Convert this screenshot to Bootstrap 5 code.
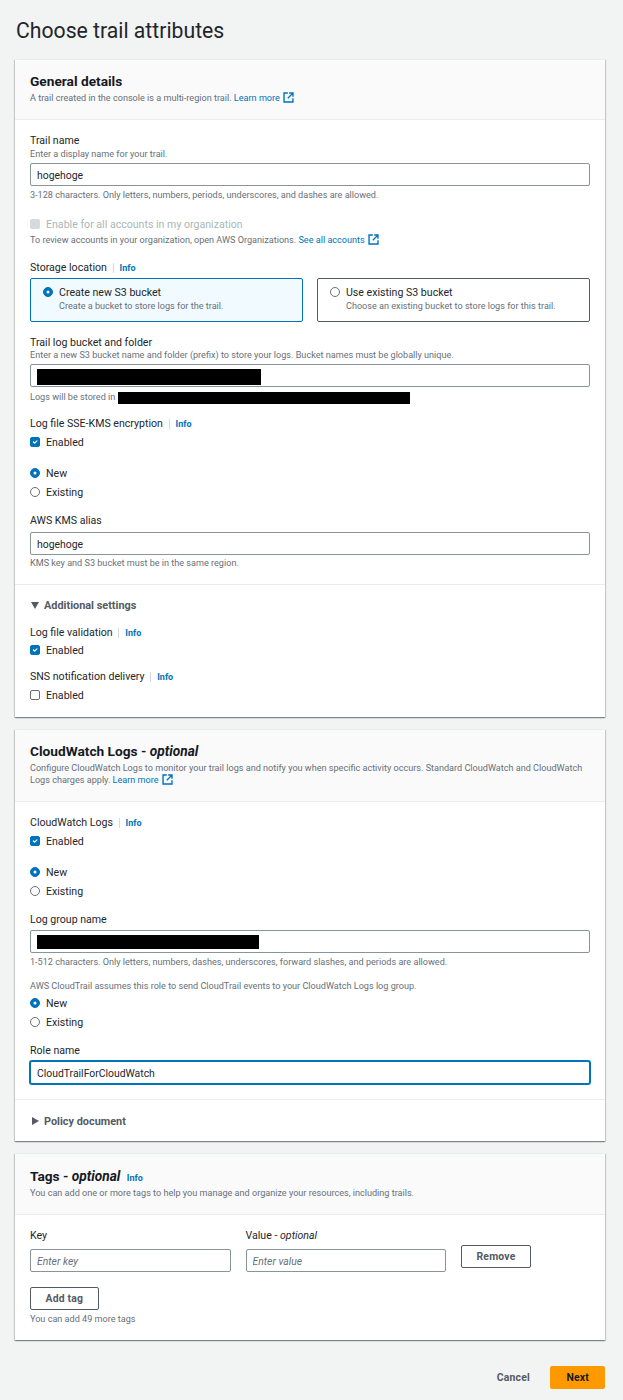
<!DOCTYPE html>
<html lang="en">
<head>
    <meta charset="UTF-8">
    <meta name="viewport" content="width=device-width, initial-scale=1.0">
    <title>Choose trail attributes</title>
    <link href="https://cdn.jsdelivr.net/npm/bootstrap@5.3.0/dist/css/bootstrap.min.css" rel="stylesheet">
    <script src="https://cdn.jsdelivr.net/npm/bootstrap@5.3.0/dist/js/bootstrap.bundle.min.js"></script>
    <style>
        body { background: #f2f3f3; color: #22262b; font-family: Roboto, "Liberation Sans", sans-serif; font-size: 10.6px; line-height: 14px; }
        .page-wrap { padding: 16px 18px 0 15px; }
        .page-title { font-size: 21.2px; line-height: 30px; font-weight: 400; margin: 0 0 13px 1px; }
        .aws-card { border: 0; border-top: 1px solid #eaeded; border-radius: 0; background: #fff; box-shadow: 0 1px 1px rgba(0,28,36,.3), 1px 1px 1px rgba(0,28,36,.15), -1px 1px 1px rgba(0,28,36,.15); margin-bottom: 12px; }
        .aws-head { background: #fafafa; border-bottom: 1px solid #eaeded; padding: 13px 15px 14px; border-radius: 0; }
        .aws-head.head-low { padding-top: 14px; }
        .aws-head h2 { font-size: 13.7px; line-height: 17px; font-weight: 700; margin: 0; color: #16191f; }
        .aws-head h2 em { font-weight: 700; }
        .aws-head h2 .info-link { line-height: 1; }
        .aws-head .hint { margin-top: 1px; }
        .aws-head .hint-wrap { line-height: 12px; margin-top: 2px; margin-bottom: 1px; }
        .aws-body { padding: 13px 15px 14px; }
        .body-role { padding-bottom: 15px; }
        .aws-foot { border-top: 1px solid #eaeded; padding: 13px 15px 15px; }
        .foot-policy { padding: 14px 15px 13px; }
        .fld-text, .form-check-label { display: block; padding-top: 1px; margin-bottom: -1px; }
        .hint { font-size: 9.1px; line-height: 14px; color: #687078; }
        .aws-link { color: #0073bb; text-decoration: none; }
        .ext-icon { vertical-align: -2px; margin-left: 1px; }
        .info-link { color: #0073bb; font-size: 9px; font-weight: 700; text-decoration: none; border-left: 1px solid #d5dbdb; padding-left: 6px; margin-left: 3px; }
        .aws-input { font-size: 10.4px; line-height: 14px; height: 23px; padding: 4px 6px 2px; border: 1px solid #879596; border-radius: 2px; color: #22262b; background: #fff; margin-top: 2px; }
        .aws-input::placeholder { font-style: italic; color: #687078; }
        .aws-input.is-focused { border-color: #0073bb; box-shadow: 0 0 0 1px #0073bb; }
        .redact-box { position: relative; }
        .redact { background: #000; display: block; }
        .redact-input { position: absolute; left: 7px; top: 5px; width: 224px; height: 16px; }
        .redact-short { width: 222px; height: 14px; }
        .redact-inline { display: inline-block; width: 292px; height: 12px; vertical-align: -4px; margin-left: 3px; }
        .form-check { min-height: 14px; padding-left: 16px; margin: 0; }
        .form-check .form-check-input { width: 10px; height: 10px; margin-top: 2px; margin-left: -16px; border: 1px solid #687078; }
        .form-check .form-check-input[type=checkbox] { border-radius: 2px; }
        .form-check-input:checked { background-color: #0073bb; border-color: #0073bb; }
        .form-check-input[type=radio]:checked { background-size: 80%; }
        .form-check .form-check-input:disabled { background-color: #d5dbdb; border-color: #d5dbdb; opacity: 1; }
        .form-check-input:disabled ~ .form-check-label { color: #aab7b8; opacity: 1; }
        .radio-stack .form-check + .form-check { margin-top: 5px; }
        .tile { flex: 1 1 0; border: 1px solid #545b64; border-radius: 2px; padding: 6px 12px; height: 44px; }
        .tile.form-check { padding-left: 12px; display: flex; gap: 6px; }
        .tile.picked { border-color: #0073bb; background: #f1faff; }
        .tile.form-check .form-check-input { margin: 2px 0 0; flex-shrink: 0; }
        .tile-row { gap: 14px; margin-top: 4px; }
        .expander { font-size: 10.9px; font-weight: 700; color: #545b64; display: flex; align-items: center; gap: 5px; }
        .expander svg { margin-left: 1px; }
        .aws-btn { font-size: 10.4px; font-weight: 700; line-height: 14px; height: 23px; padding: 3px 14.5px; border: 1px solid #545b64; border-radius: 2px; background: #fff; color: #545b64; letter-spacing: .2px; }
        .btn-next { background: #f90; border-color: #f90; color: #16191f; padding: 3px 15px; }
        .btn-cancel { border-color: transparent; background: transparent; }
        .tag-col { width: 200.5px; }
        .tag-row { gap: 15px; }
        .tag-action { padding-top: 17px; }
        .foot-row { padding: 14px 0 11px; gap: 5px; }
        .sp-1 { margin-top: 1px; } .sp-2 { margin-top: 2px; } .sp-3 { margin-top: 3px; } .sp-4 { margin-top: 4px; } .sp-5 { margin-top: 5px; }
        .sp-7 { margin-top: 7px; } .sp-10 { margin-top: 10px; } .sp-12 { margin-top: 12px; } .sp-13 { margin-top: 13px; }
        .sp-14 { margin-top: 14px; } .sp-15 { margin-top: 15px; } .sp-17 { margin-top: 17px; } .sp-neg { margin-top: -2px; }
    </style>
</head>
<body>
<div class="page-wrap">
    <h1 class="page-title">Choose trail attributes</h1>

    <div class="card aws-card">
        <div class="card-header aws-head">
            <h2>General details</h2>
            <div class="hint">A trail created in the console is a multi-region trail. <a class="aws-link" href="#">Learn more
                <svg class="ext-icon" width="11" height="11" viewBox="0 0 16 16" fill="none" stroke="#0073bb" stroke-width="2"><path d="M7 1.500H1.500v13h13V9M9 1.500h5.500V7M14 2L7 9"/></svg></a></div>
        </div>
        <div class="card-body aws-body">
            <div class="fld-text">Trail name</div>
            <div class="hint">Enter a display name for your trail.</div>
            <input class="form-control aws-input" type="text" value="hogehoge">
            <div class="hint sp-2">3-128 characters. Only letters, numbers, periods, underscores, and dashes are allowed.</div>

            <div class="form-check sp-15">
                <input class="form-check-input" type="checkbox" id="orgAll" disabled>
                <label class="form-check-label" for="orgAll">Enable for all accounts in my organization</label>
            </div>
            <div class="hint sp-2">To review accounts in your organization, open AWS Organizations. <a class="aws-link" href="#">See all accounts
                <svg class="ext-icon" width="11" height="11" viewBox="0 0 16 16" fill="none" stroke="#0073bb" stroke-width="2"><path d="M7 1.500H1.500v13h13V9M9 1.500h5.500V7M14 2L7 9"/></svg></a></div>

            <div class="fld-text sp-13">Storage location <a class="info-link" href="#">Info</a></div>
            <div class="d-flex tile-row">
                <div class="tile picked form-check">
                    <input class="form-check-input" type="radio" name="bucket" checked>
                    <div><div class="fld-text">Create new S3 bucket</div><div class="hint">Create a bucket to store logs for the trail.</div></div>
                </div>
                <div class="tile form-check">
                    <input class="form-check-input" type="radio" name="bucket">
                    <div><div class="fld-text">Use existing S3 bucket</div><div class="hint">Choose an existing bucket to store logs for this trail.</div></div>
                </div>
            </div>

            <div class="fld-text sp-13">Trail log bucket and folder</div>
            <div class="hint sp-neg">Enter a new S3 bucket name and folder (prefix) to store your logs. Bucket names must be globally unique.</div>
            <div class="redact-box">
                <input class="form-control aws-input" type="text">
                <span class="redact redact-input"></span>
            </div>
            <div class="hint sp-3">Logs will be stored in<span class="redact redact-inline"></span></div>

            <div class="fld-text sp-12">Log file SSE-KMS encryption <a class="info-link" href="#">Info</a></div>
            <div class="form-check sp-5">
                <input class="form-check-input" type="checkbox" id="sse" checked>
                <label class="form-check-label" for="sse">Enabled</label>
            </div>
            <div class="radio-stack sp-17">
                <div class="form-check">
                    <input class="form-check-input" type="radio" name="kms" id="kmsNew" checked>
                    <label class="form-check-label" for="kmsNew">New</label>
                </div>
                <div class="form-check">
                    <input class="form-check-input" type="radio" name="kms" id="kmsOld">
                    <label class="form-check-label" for="kmsOld">Existing</label>
                </div>
            </div>
            <div class="fld-text sp-14">AWS KMS alias</div>
            <input class="form-control aws-input sp-5" type="text" value="hogehoge">
            <div class="hint sp-1">KMS key and S3 bucket must be in the same region.</div>
        </div>
        <div class="aws-foot">
            <div class="expander">
                <svg width="8" height="7" viewBox="0 0 8 7"><path d="M0 0h8L4 7z" fill="#545b64"/></svg><span class="fld-text">Additional settings</span>
            </div>
            <div class="fld-text sp-13">Log file validation <a class="info-link" href="#">Info</a></div>
            <div class="form-check sp-4">
                <input class="form-check-input" type="checkbox" id="val" checked>
                <label class="form-check-label" for="val">Enabled</label>
            </div>
            <div class="fld-text sp-12">SNS notification delivery <a class="info-link" href="#">Info</a></div>
            <div class="form-check sp-5">
                <input class="form-check-input" type="checkbox" id="sns">
                <label class="form-check-label" for="sns">Enabled</label>
            </div>
        </div>
    </div>

    <div class="card aws-card">
        <div class="card-header aws-head">
            <h2>CloudWatch Logs - <em>optional</em></h2>
            <div class="hint hint-wrap">Configure CloudWatch Logs to monitor your trail logs and notify you when specific activity occurs. Standard CloudWatch and CloudWatch Logs charges apply. <a class="aws-link" href="#">Learn more
                <svg class="ext-icon" width="11" height="11" viewBox="0 0 16 16" fill="none" stroke="#0073bb" stroke-width="2"><path d="M7 1.500H1.500v13h13V9M9 1.500h5.500V7M14 2L7 9"/></svg></a></div>
        </div>
        <div class="card-body aws-body body-role">
            <div class="fld-text">CloudWatch Logs <a class="info-link" href="#">Info</a></div>
            <div class="form-check sp-5">
                <input class="form-check-input" type="checkbox" id="cw" checked>
                <label class="form-check-label" for="cw">Enabled</label>
            </div>
            <div class="radio-stack sp-17">
                <div class="form-check">
                    <input class="form-check-input" type="radio" name="lg" id="lgNew" checked>
                    <label class="form-check-label" for="lgNew">New</label>
                </div>
                <div class="form-check">
                    <input class="form-check-input" type="radio" name="lg" id="lgOld">
                    <label class="form-check-label" for="lgOld">Existing</label>
                </div>
            </div>
            <div class="fld-text sp-14">Log group name</div>
            <div class="redact-box sp-4">
                <input class="form-control aws-input mt-0" type="text">
                <span class="redact redact-input redact-short"></span>
            </div>
            <div class="hint sp-2">1-512 characters. Only letters, numbers, dashes, underscores, forward slashes, and periods are allowed.</div>
            <div class="hint sp-10">AWS CloudTrail assumes this role to send CloudTrail events to your CloudWatch Logs log group.</div>
            <div class="radio-stack sp-3">
                <div class="form-check">
                    <input class="form-check-input" type="radio" name="role" id="roleNew" checked>
                    <label class="form-check-label" for="roleNew">New</label>
                </div>
                <div class="form-check">
                    <input class="form-check-input" type="radio" name="role" id="roleOld">
                    <label class="form-check-label" for="roleOld">Existing</label>
                </div>
            </div>
            <div class="fld-text sp-14">Role name</div>
            <input class="form-control aws-input is-focused sp-4" type="text" value="CloudTrailForCloudWatch">
        </div>
        <div class="aws-foot foot-policy">
            <div class="expander">
                <svg width="8" height="8" viewBox="0 0 8 8"><path d="M1 0l7 4-7 4z" fill="#545b64"/></svg><span class="fld-text">Policy document</span>
            </div>
        </div>
    </div>

    <div class="card aws-card">
        <div class="card-header aws-head head-low">
            <h2>Tags - <em>optional</em> <a class="info-link border-0 ps-0" href="#">Info</a></h2>
            <div class="hint">You can add one or more tags to help you manage and organize your resources, including trails.</div>
        </div>
        <div class="card-body aws-body">
            <div class="d-flex tag-row">
                <div class="tag-col">
                    <div class="fld-text">Key</div>
                    <input class="form-control aws-input sp-7" type="text" placeholder="Enter key">
                </div>
                <div class="tag-col">
                    <div class="fld-text">Value - <em>optional</em></div>
                    <input class="form-control aws-input sp-7" type="text" placeholder="Enter value">
                </div>
                <div class="tag-action"><button class="btn aws-btn" type="button">Remove</button></div>
            </div>
            <button class="btn aws-btn sp-15 d-block" type="button">Add tag</button>
            <div class="hint sp-2">You can add 49 more tags</div>
        </div>
    </div>

    <div class="d-flex justify-content-end align-items-center foot-row">
        <button class="btn aws-btn btn-cancel" type="button">Cancel</button>
        <button class="btn aws-btn btn-next" type="button">Next</button>
    </div>
</div>
</body>
</html>
